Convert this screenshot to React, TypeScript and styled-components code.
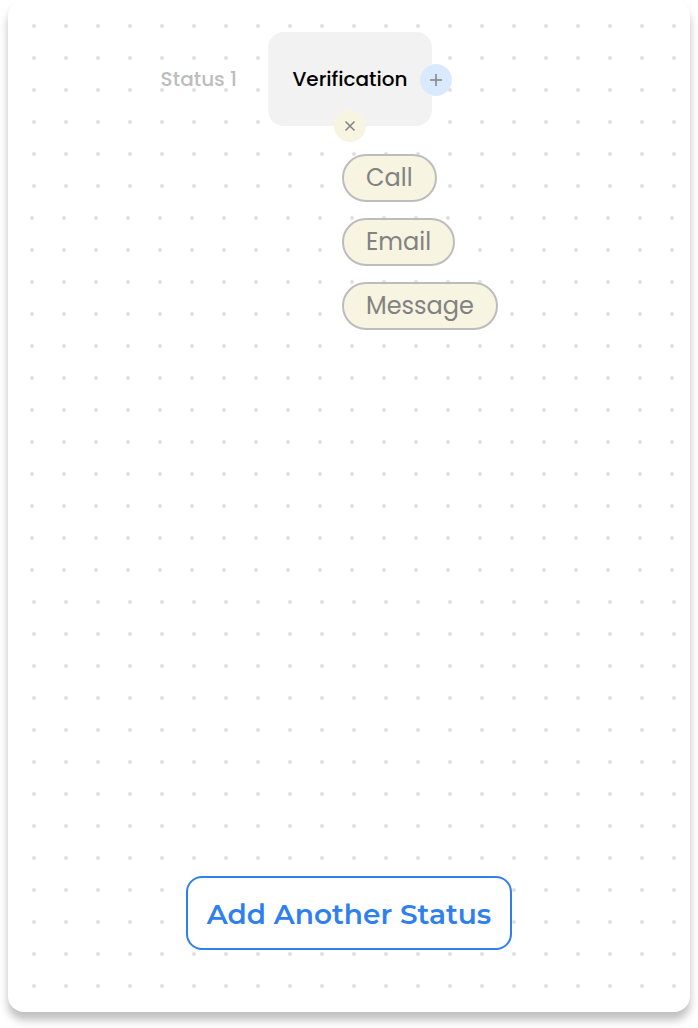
import React from "react";
import styled, { createGlobalStyle } from "styled-components";

const GlobalStyle = createGlobalStyle`
  *, *::before, *::after { box-sizing: border-box; }
  body { margin: 0; background: #fff; font-family: Poppins, Inter, "Liberation Sans", sans-serif; }
  button { font: inherit; cursor: pointer; }
`;

const Board = styled.main`
  position: relative;
  display: flex;
  flex-direction: column;
  justify-content: space-between;
  gap: 32px;
  min-height: calc(100vh - 16px);
  margin: 0 8px 16px;
  padding: 32px 0 62px;
  border-radius: 16px;
  background: #fff;
  box-shadow: 0 8px 8px rgba(0, 0, 0, 0.25);
`;

const Dots = styled.svg`
  position: absolute;
  inset: 0;
  width: 100%;
  height: 100%;
  border-radius: 16px;
  pointer-events: none;
`;

const Flow = styled.section`
  position: relative;
  display: grid;
  grid-template-columns: 1fr 164px 1fr;
  row-gap: 28px;
  padding-left: 2px;
`;

const StatusLabel = styled.span`
  align-self: center;
  justify-self: end;
  margin-right: 31px;
  color: #bdbdbd;
  font-size: 20px;
  font-weight: 500;
  line-height: 30px;
`;

const Node = styled.div`
  position: relative;
  padding: 32px 0;
  border-radius: 16px;
  background: #f2f2f2;
  color: #000;
  font-size: 20px;
  font-weight: 500;
  line-height: 30px;
  text-align: center;
`;

const RoundButton = styled.button<{ $place: "side" | "bottom" }>`
  position: absolute;
  display: grid;
  place-items: center;
  width: 32px;
  height: 32px;
  padding: 0;
  border: 0;
  border-radius: 50%;
  ${({ $place }) =>
    $place === "side"
      ? "top: 32px; right: -20px; background: #daeafe;"
      : "bottom: -16px; left: 66px; background: #f7f4e1;"}
`;

const Actions = styled.ul`
  grid-column: 2 / -1;
  display: flex;
  flex-direction: column;
  align-items: flex-start;
  gap: 16px;
  margin: 0;
  padding: 0 0 0 74px;
  list-style: none;
`;

const Pill = styled.button`
  display: block;
  height: 48px;
  padding: 0 22px;
  border: 2px solid #bdbdbd;
  border-radius: 24px;
  background: #f7f4e1;
  color: #828282;
  font-size: 24px;
  line-height: 44px;
`;

const AddButton = styled.button`
  position: relative;
  align-self: center;
  height: 74px;
  padding: 2px 19px 0;
  border: 2px solid #2f80ed;
  border-radius: 16px;
  background: #fff;
  color: #2f80ed;
  font-family: Montserrat, Inter, "Liberation Sans", sans-serif;
  font-size: 28px;
  font-weight: 600;
  line-height: 34px;
`;

const actions = ["Call", "Email", "Message"];

export default function App() {
  return (
    <>
      <GlobalStyle />
      <Board>
        <Dots aria-hidden="true">
          <defs>
            <pattern id="dots" x="10" y="10" width="32" height="32" patternUnits="userSpaceOnUse">
              <circle cx="16" cy="16" r="2" fill="#e0e0e0" />
            </pattern>
            <pattern id="dots-shifted" x="8" y="10" width="32" height="32" patternUnits="userSpaceOnUse">
              <circle cx="16" cy="16" r="2" fill="#e0e0e0" />
            </pattern>
          </defs>
          <rect width="100%" height="202" fill="url(#dots)" />
          <rect y="202" width="100%" height="384" fill="url(#dots-shifted)" />
          <rect y="586" width="100%" height="100%" fill="url(#dots)" />
        </Dots>
        <Flow>
          <StatusLabel>Status 1</StatusLabel>
          <Node>
            Verification
            <RoundButton $place="side" aria-label="Add step">
              <svg width="14" height="14" viewBox="0 0 14 14" fill="none" stroke="#828282" strokeWidth="1.5">
                <path d="M7 1v12M1 7h12" />
              </svg>
            </RoundButton>
            <RoundButton $place="bottom" aria-label="Close actions">
              <svg width="12" height="12" viewBox="0 0 12 12" fill="none" stroke="#828282" strokeWidth="1.5">
                <path d="M1.5 1.5l9 9M10.5 1.5l-9 9" />
              </svg>
            </RoundButton>
          </Node>
          <Actions>
            {actions.map((action) => (
              <li key={action}>
                <Pill>{action}</Pill>
              </li>
            ))}
          </Actions>
        </Flow>
        <AddButton>Add Another Status</AddButton>
      </Board>
    </>
  );
}
